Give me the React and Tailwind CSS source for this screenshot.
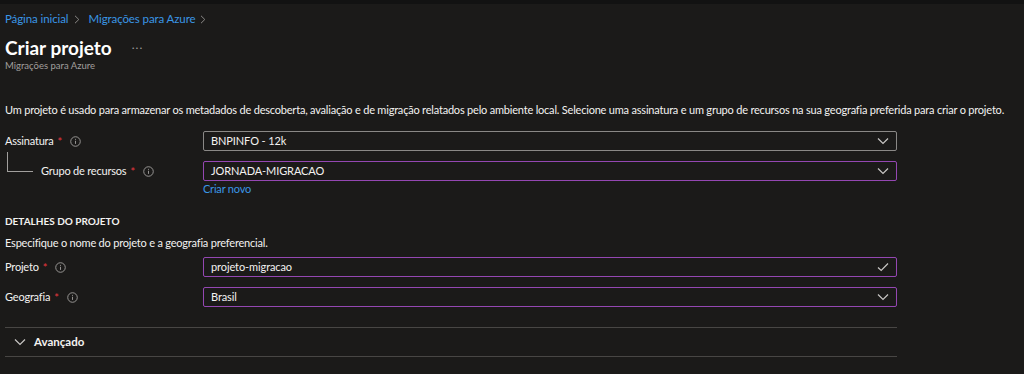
import React from "react";

const font = { fontFamily: 'Lato, "Noto Sans", sans-serif' };

function Info() {
  return (
    <svg width="11" height="11" viewBox="0 0 12 12" className="shrink-0">
      <circle cx="6" cy="6" r="5.2" fill="none" stroke="#a19f9d" strokeWidth="1" />
      <line x1="6" y1="5.2" x2="6" y2="8.6" stroke="#a19f9d" strokeWidth="1" />
      <circle cx="6" cy="3.6" r="0.6" fill="#a19f9d" />
    </svg>
  );
}

function Chevron() {
  return (
    <svg width="12" height="8" viewBox="0 0 12 8">
      <path d="M1 1.5 L6 6.5 L11 1.5" fill="none" stroke="#c8c6c4" strokeWidth="1.2" />
    </svg>
  );
}

function Check() {
  return (
    <svg width="12" height="10" viewBox="0 0 12 10">
      <path d="M1 5.5 L4.2 8.5 L11 1.5" fill="none" stroke="#c8c6c4" strokeWidth="1.2" />
    </svg>
  );
}

function Crumb() {
  return (
    <svg width="6" height="9" viewBox="0 0 6 9" className="shrink-0">
      <path d="M1 0.8 L4.8 4.5 L1 8.2" fill="none" stroke="#8a8886" strokeWidth="1" />
    </svg>
  );
}

function Label({ text }) {
  return (
    <div className="flex items-center">
      <span className="text-[11px] tracking-[-0.2px] text-[#f3f2f1]">{text}</span>
      <span className="text-[11px] text-[#e8373f] ml-[4px] leading-none">*</span>
      <span className="ml-[8px] flex"><Info /></span>
    </div>
  );
}

function Field({ value, purple, icon }) {
  return (
    <div
      className={`h-[20px] w-[694px] border flex items-center justify-between pl-[7px] pr-[7px] rounded-[2px] ${
        purple ? "border-[#9447b2]" : "border-[#8a8886]"
      }`}
    >
      <span className="text-[11px] tracking-[-0.1px] text-[#f3f2f1]">{value}</span>
      {icon === "check" ? <Check /> : <Chevron />}
    </div>
  );
}

export default function App() {
  return (
    <div className="w-[1024px] h-[374px] bg-[#1b1a19] overflow-hidden" style={font}>
      <div className="h-[4px] bg-[#121212]" />
      <div className="px-[5px]">
        <div className="flex items-center h-[30px] text-[11.5px] tracking-[-0.1px] text-[#3a96e6]">
          <span>Página inicial</span>
          <span className="ml-[6px] mr-[8px] flex"><Crumb /></span>
          <span>Migrações para Azure</span>
          <span className="ml-[5px] flex"><Crumb /></span>
        </div>
        <div className="flex items-center h-[26px]">
          <span className="text-[19px] font-bold text-white leading-none">Criar projeto</span>
          <span className="ml-[20px] text-[#a19f9d] text-[12px] tracking-[1px] -mt-[4px]">...</span>
        </div>
        <div className="text-[9.5px] text-[#a19f9d] leading-[14px] mt-[-1px]">Migrações para Azure</div>

        <div className="mt-[29px] text-[11px] tracking-[-0.2px] text-[#f3f2f1] leading-[16px] whitespace-nowrap">
          Um projeto é usado para armazenar os metadados de descoberta, avaliação e de migração relatados pelo ambiente local. Selecione uma assinatura e um grupo de recursos na sua geografia preferida para criar o projeto.
        </div>

        <div className="mt-[13px] flex items-center">
          <div className="w-[198px]"><Label text="Assinatura" /></div>
          <Field value="BNPINFO - 12k" />
        </div>
        <div className="mt-[10px] flex items-center relative">
          <div className="w-[198px] flex items-center">
            <div className="w-[36px] h-[20px] relative">
              <div className="absolute left-[2px] -top-[9px] w-[26px] h-[20px] border-l border-b border-[#a19f9d]" />
            </div>
            <Label text="Grupo de recursos" />
          </div>
          <Field value="JORNADA-MIGRACAO" purple />
        </div>
        <div className="ml-[198px] text-[11px] tracking-[-0.2px] text-[#3a96e6] leading-[16px]">Criar novo</div>

        <div className="mt-[16px] text-[10px] font-bold text-[#f3f2f1] leading-[16px]">DETALHES DO PROJETO</div>
        <div className="mt-[6px] text-[11px] tracking-[-0.2px] text-[#f3f2f1] leading-[16px]">Especifique o nome do projeto e a geografia preferencial.</div>

        <div className="mt-[6px] flex items-center">
          <div className="w-[198px]"><Label text="Projeto" /></div>
          <Field value="projeto-migracao" purple icon="check" />
        </div>
        <div className="mt-[10px] flex items-center">
          <div className="w-[198px]"><Label text="Geografia" /></div>
          <Field value="Brasil" purple />
        </div>

        <div className="mt-[20px] w-[892px] border-t border-[#484644]" />
        <div className="h-[28px] flex items-center">
          <span className="ml-[9px] flex"><Chevron /></span>
          <span className="ml-[8px] text-[11.5px] font-bold text-[#f3f2f1]">Avançado</span>
        </div>
        <div className="w-[892px] border-t border-[#484644]" />
      </div>
    </div>
  );
}
